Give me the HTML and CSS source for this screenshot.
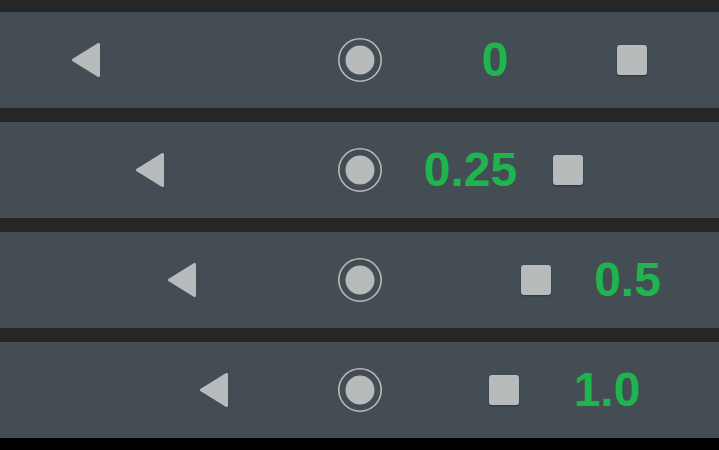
FILE: index.html
```html
<!DOCTYPE html>
<html>
<head>
<meta charset="utf-8">
<link rel="stylesheet" href="styles.css">
</head>
<body>
<div class="stack">
  <div class="bar bar-1">
    <svg class="back" viewBox="0 0 28 34"><polygon points="26.5,1.5 26.5,32.5 1.5,17"/></svg>
    <svg class="home" viewBox="0 0 44 44"><circle cx="22" cy="22" r="21.2" class="ring"/><circle cx="22" cy="22" r="14.5" class="dot"/></svg>
    <span class="val">0</span>
    <div class="recent"></div>
  </div>
  <div class="bar bar-2">
    <svg class="back" viewBox="0 0 28 34"><polygon points="26.5,1.5 26.5,32.5 1.5,17"/></svg>
    <svg class="home" viewBox="0 0 44 44"><circle cx="22" cy="22" r="21.2" class="ring"/><circle cx="22" cy="22" r="14.5" class="dot"/></svg>
    <span class="val">0.25</span>
    <div class="recent"></div>
  </div>
  <div class="bar bar-3">
    <svg class="back" viewBox="0 0 28 34"><polygon points="26.5,1.5 26.5,32.5 1.5,17"/></svg>
    <svg class="home" viewBox="0 0 44 44"><circle cx="22" cy="22" r="21.2" class="ring"/><circle cx="22" cy="22" r="14.5" class="dot"/></svg>
    <div class="recent"></div>
    <span class="val">0.5</span>
  </div>
  <div class="bar bar-4">
    <svg class="back" viewBox="0 0 28 34"><polygon points="26.5,1.5 26.5,32.5 1.5,17"/></svg>
    <svg class="home" viewBox="0 0 44 44"><circle cx="22" cy="22" r="21.2" class="ring"/><circle cx="22" cy="22" r="14.5" class="dot"/></svg>
    <div class="recent"></div>
    <span class="val">1.0</span>
  </div>
</div>
<div class="floor"></div>
</body>
</html>
```
FILE: styles.css
```css
html, body {
  margin: 0;
  padding: 0;
  background: #262626;
  width: 719px;
  height: 450px;
  overflow: hidden;
}
.stack {
  display: flex;
  flex-direction: column;
  gap: 14px;
  padding-top: 12px;
}
.bar {
  height: 96px;
  background: #454d54;
  display: flex;
  align-items: center;
}
.back {
  width: 28px;
  height: 34px;
  flex: none;
}
.back polygon {
  fill: #b7bbbc;
  stroke: #b7bbbc;
  stroke-width: 3;
  stroke-linejoin: round;
}
.home {
  width: 44px;
  height: 44px;
  flex: none;
}
.ring {
  fill: none;
  stroke: #b7bbbc;
  stroke-width: 1.6;
}
.dot {
  fill: #b7bbbc;
}
.recent {
  width: 30px;
  height: 30px;
  border-radius: 3px;
  background: #b7bbbc;
  box-shadow: 0 1px 2px rgba(0,0,0,0.35);
  flex: none;
}
.val {
  width: 100px;
  flex: none;
  text-align: center;
  font-family: "Liberation Sans", Arial, sans-serif;
  font-weight: bold;
  font-size: 48px;
  line-height: 1;
  color: #1eb54f;
}
.bar-1 { padding-left: 72px; }
.bar-1 .home { margin-left: 238px; }
.bar-1 .val { margin-left: 63px; }
.bar-1 .recent { margin-left: 72px; }

.bar-2 { padding-left: 136px; }
.bar-2 .home { margin-left: 174px; }
.bar-2 .val { margin-left: 38.5px; }
.bar-2 .recent { margin-left: 32.5px; }

.bar-3 { padding-left: 168px; }
.bar-3 .home { margin-left: 142px; }
.bar-3 .recent { margin-left: 139px; }
.bar-3 .val { margin-left: 26.5px; }

.bar-4 { padding-left: 200px; }
.bar-4 .home { margin-left: 110px; }
.bar-4 .recent { margin-left: 107px; }
.bar-4 .val { margin-left: 38px; }

.floor {
  height: 12px;
  background: #000;
}
```
